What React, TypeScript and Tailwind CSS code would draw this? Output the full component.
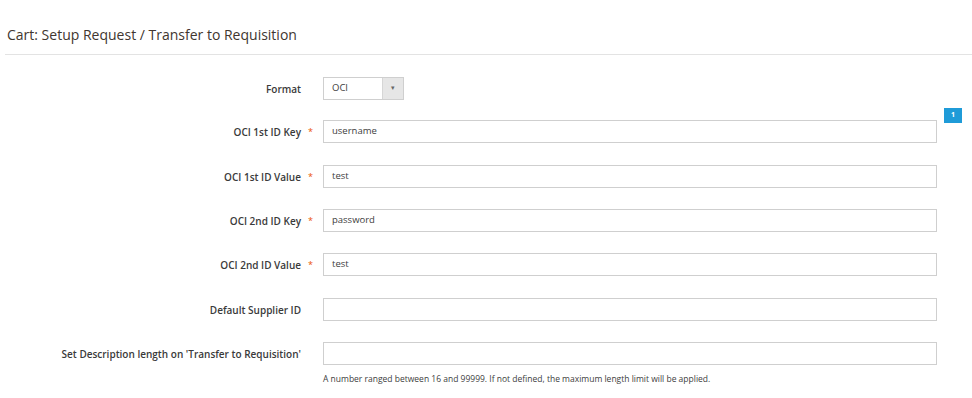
import React from "react";

const font = { fontFamily: '"Open Sans", "Noto Sans", sans-serif' };

function Row({
  label,
  required,
  value,
  className,
  children,
}: {
  label: string;
  required?: boolean;
  value?: string;
  className?: string;
  children?: React.ReactNode;
}) {
  return (
    <div className={`relative flex items-center ${className ?? ""}`}>
      <div className="w-[301px] text-right text-[10px] font-semibold text-[#3a3a3a] leading-none">
        {label}
      </div>
      <div className="w-[22px] pl-[7px] text-[9px] text-[#eb5202] leading-none">
        {required ? "*" : ""}
      </div>
      {children ?? (
        <div className="w-[614px] h-[23px] border border-[#cfcfcf] bg-white flex items-center pl-[8px] text-[9.5px] text-[#404040]">
          {value}
        </div>
      )}
    </div>
  );
}

export default function App() {
  return (
    <div className="w-[972px] h-[398px] bg-white overflow-hidden" style={font}>
      <div className="ml-[5px] pt-[26px] pb-[10px] pl-[2px] border-b border-[#e3e3e3] text-[14px] text-[#41362f] leading-[18px]">
        Cart: Setup Request / Transfer to Requisition
      </div>
      <div className="flex flex-col">
        <Row label="Format" className="mt-[22px]">
          <div className="w-[81px] h-[23px] border border-[#cfcfcf] flex">
            <div className="flex-1 bg-white flex items-center pl-[8px] text-[9.5px] text-[#404040]">
              OCI
            </div>
            <div className="w-[21px] bg-[#e6e6e6] border-l border-[#d6d6d6] flex items-center justify-center text-[7px] text-[#666]">
              ▾
            </div>
          </div>
        </Row>
        <Row label="OCI 1st ID Key" required value="username" className="mt-[20px]" />
        <Row label="OCI 1st ID Value" required value="test" className="mt-[22px]" />
        <Row label="OCI 2nd ID Key" required value="password" className="mt-[21px]" />
        <Row label="OCI 2nd ID Value" required value="test" className="mt-[21px]" />
        <Row label="Default Supplier ID" value="" className="mt-[22px]" />
        <Row label="Set Description length on 'Transfer to Requisition'" value="" className="mt-[21px]" />
        <div className="ml-[323px] mt-[9px] text-[8.5px] text-[#404040] leading-[10px]">
          A number ranged between 16 and 99999. If not defined, the maximum length limit will be applied.
        </div>
      </div>
      <div className="absolute left-[944px] top-[108px] w-[18px] h-[15px] bg-[#1f9bd8] text-white text-[7px] font-bold flex items-center justify-center">
        1
      </div>
    </div>
  );
}
